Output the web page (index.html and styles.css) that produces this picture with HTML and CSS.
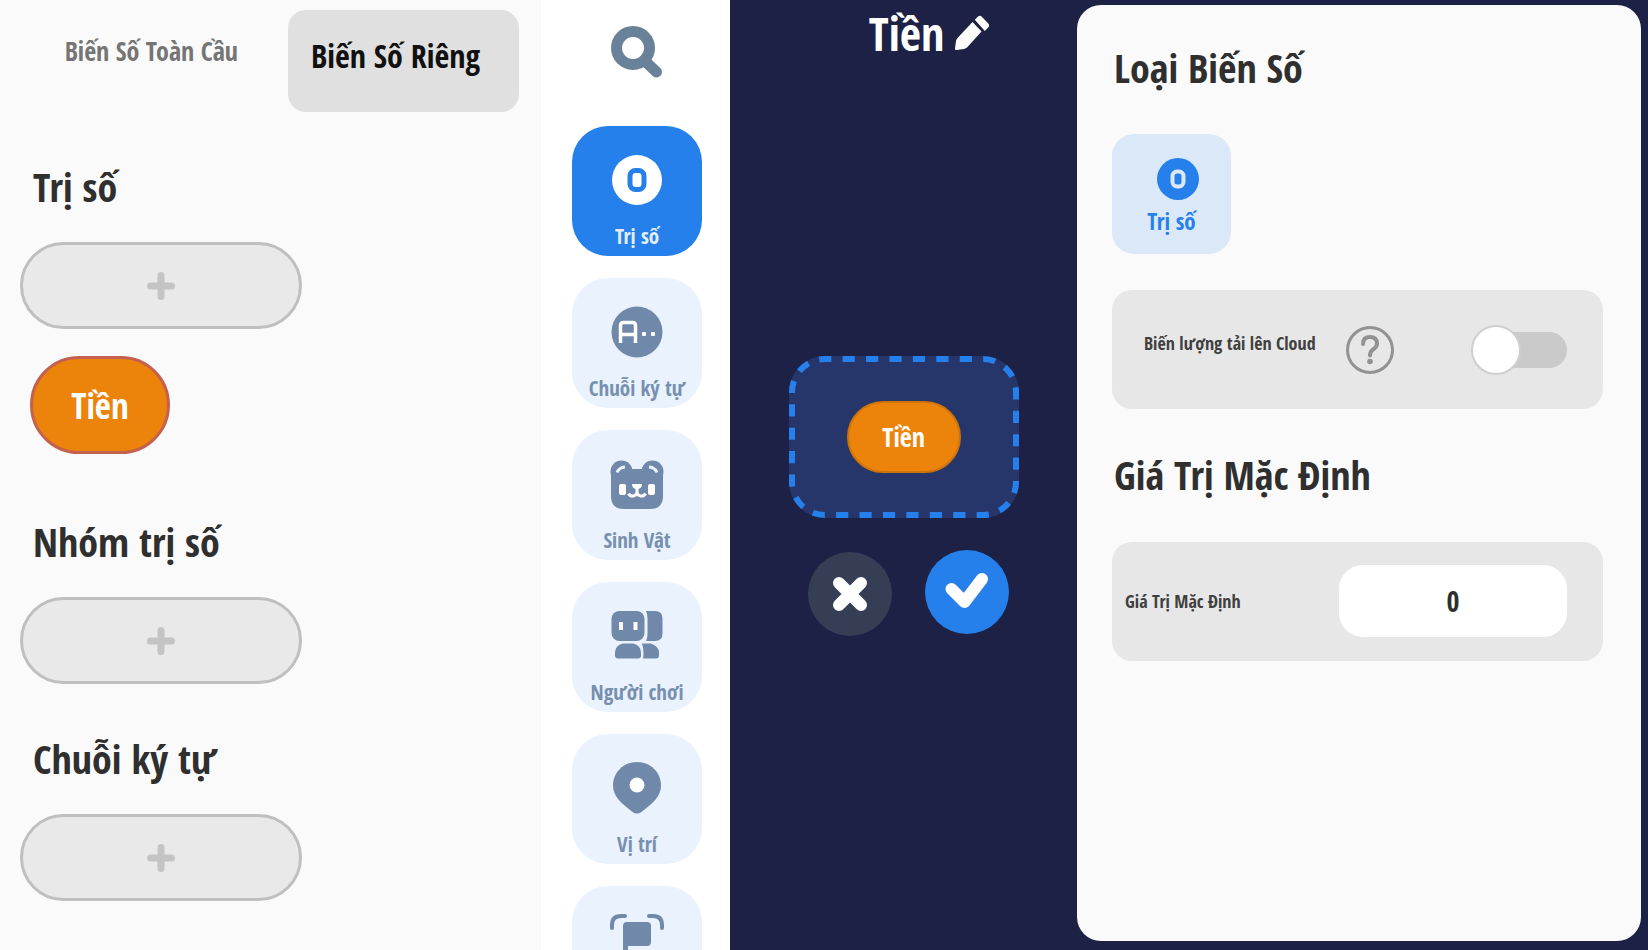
FILE: index.html
```html
<!DOCTYPE html>
<html lang="vi">
<head>
<meta charset="utf-8">
<meta name="viewport" content="width=device-width, initial-scale=1">
<title>Biến Số</title>
<link rel="stylesheet" href="styles.css">
</head>
<body>
<div class="app">
  <section class="vars">
    <nav class="tabs">
      <button class="tab" type="button">Biến Số Toàn Cầu</button>
      <button class="tab tab-active" type="button">Biến Số Riêng</button>
    </nav>

    <div class="group">
      <h2 class="group-title">Trị số</h2>
      <button class="add" type="button" aria-label="Thêm trị số">
        <svg class="plus" viewBox="0 0 28 28"><path d="M14 3.500v21M3.500 14h21"/></svg>
      </button>
      <button class="pill" type="button">Tiền</button>
    </div>

    <div class="group">
      <h2 class="group-title">Nhóm trị số</h2>
      <button class="add" type="button" aria-label="Thêm nhóm trị số">
        <svg class="plus" viewBox="0 0 28 28"><path d="M14 3.500v21M3.500 14h21"/></svg>
      </button>
    </div>

    <div class="group">
      <h2 class="group-title">Chuỗi ký tự</h2>
      <button class="add" type="button" aria-label="Thêm chuỗi ký tự">
        <svg class="plus" viewBox="0 0 28 28"><path d="M14 3.500v21M3.500 14h21"/></svg>
      </button>
    </div>
  </section>

  <nav class="rail">
    <button class="search" type="button" aria-label="Tìm kiếm">
      <svg class="search-icon" viewBox="0 0 52 52"><circle cx="22" cy="22" r="16.500"/><path d="M36 37l9.500 9"/></svg>
    </button>
    <button class="tile tile-active" type="button">
      <svg class="tile-icon" viewBox="0 0 54 54"><circle cx="27" cy="27" r="25" fill="#fff"/><rect x="20" y="17.500" width="14" height="19" rx="5.500" fill="none" stroke="#2680eb" stroke-width="5"/></svg>
      <span class="tile-label">Trị số</span>
    </button>
    <button class="tile" type="button">
      <svg class="tile-icon" viewBox="0 0 54 54"><circle cx="27" cy="27" r="25.500" fill="#7088aa"/><path d="M10.500 38V20.500q0-3 3-3h9q3 0 3 3V38M10.500 29.500h15" fill="none" stroke="#fff" stroke-width="3.500"/><rect x="32" y="27" width="4" height="4" rx="1" fill="#fff"/><rect x="41" y="27" width="4" height="4" rx="1" fill="#fff"/></svg>
      <span class="tile-label">Chuỗi ký tự</span>
    </button>
    <button class="tile" type="button">
      <svg class="tile-icon" viewBox="0 0 54 54"><g fill="#7088aa"><circle cx="11.500" cy="14.500" r="11"/><circle cx="42.500" cy="14.500" r="11"/><path d="M1 19q0-7 8-7h36q8 0 8 7v20q0 13-13 13H14Q1 52 1 39z"/></g><path d="M7 15.500q2-5 8-5.500M47 15.500q-2-5-8-5.500" fill="none" stroke="#eaf2fe" stroke-width="3"/><g fill="#fff"><rect x="9" y="27" width="7" height="11" rx="2"/><rect x="38" y="27" width="7" height="11" rx="2"/><path d="M22 27h10q0 4-3.500 5v5h-3v-5Q22 31 22 27z"/></g><path d="M18.500 36.500q1.500 3 5 2.500 2.500-.5 3.500-2.500 1 2 3.500 2.500 3.500.5 5-2.500" fill="none" stroke="#fff" stroke-width="3"/></svg>
      <span class="tile-label">Sinh Vật</span>
    </button>
    <button class="tile" type="button">
      <svg class="tile-icon" viewBox="0 0 54 54"><g fill="#7088aa"><rect x="1.500" y="2" width="33" height="30" rx="8"/><path d="M36 2h9q7.500 0 7.500 7.500v15Q52.500 32 45 32h-9q1.500-3 1.500-7V9q0-4-1.500-7z"/><path d="M13 34.500h10q8 2 8 9v3q0 3-3 3H8q-3 0-3-3v-3q0-7 8-9z"/><path d="M32 34.500h9q8 3 8 9v3q0 3-3 3H33q.5-2 .5-5 0-5-1.500-10z"/></g><path d="M11 13v8M25.500 13v8" stroke="#fff" stroke-width="4" fill="none"/></svg>
      <span class="tile-label">Người chơi</span>
    </button>
    <button class="tile" type="button">
      <svg class="tile-icon" viewBox="0 0 54 54"><path fill="#7088aa" d="M27 1C13.500 1 3 11.500 3 24.500c0 11 8.500 18 19.500 26.500q4.500 3 9 0C42.500 42.500 51 35.500 51 24.500 51 11.500 40.500 1 27 1z"/><circle cx="27" cy="24" r="7.500" fill="#fff"/></svg>
      <span class="tile-label">Vị trí</span>
    </button>
    <button class="tile" type="button" aria-label="Khu vực">
      <svg class="tile-icon" viewBox="0 0 54 54"><path d="M2 15V12Q2 3 11 3h4M39 3h4q9 0 9 9v3M2 40v3q0 9 9 9h4M39 52h4q9 0 9-9v-3" fill="none" stroke="#7088aa" stroke-width="4" stroke-linecap="round"/><path fill="#7088aa" d="M17 9h20q4 0 4 4v16q0 4-4 4H18v13h-5V13q0-4 4-4z"/></svg>
    </button>
  </nav>

  <main class="stage">
    <header class="stage-head">
      <h1 class="stage-title">Tiền</h1>
      <button class="edit" type="button" aria-label="Đổi tên">
        <svg class="edit-icon" viewBox="0 0 36 36"><path d="M18.500 7l9 9.500L13.500 32q-1.500 1.500-3.500 2L2.500 35Q.8 35.300 1 33.500L2 26q.3-2 2-3.500zM20.800 4.700l3-3q2-1.800 4 0l6.500 6.800q1.600 2 0 4l-3.500 3.500z" fill="#fff"/></svg>
      </button>
    </header>
    <div class="drop">
      <svg class="drop-frame" viewBox="0 0 230 162" preserveAspectRatio="none">
        <rect width="230" height="162" rx="36" fill="#26366a"/>
        <path d="M36 3h158a33 33 0 0 1 33 33v90a33 33 0 0 1-33 33H36a33 33 0 0 1-33-33V36A33 33 0 0 1 36 3z" pathLength="720" fill="none" stroke="#2680eb" stroke-width="6" stroke-dasharray="12.500 11.500" stroke-dashoffset="6"/>
      </svg>
      <button class="drop-pill" type="button">Tiền</button>
    </div>
    <div class="actions">
      <button class="round round-cancel" type="button" aria-label="Hủy">
        <svg class="round-icon" viewBox="0 0 44 44"><path d="M11 11l22 22M33 11L11 33"/></svg>
      </button>
      <button class="round round-ok" type="button" aria-label="Đồng ý">
        <svg class="round-icon" viewBox="0 0 44 44"><path d="M6.500 19l13 13L37 9"/></svg>
      </button>
    </div>
  </main>

  <aside class="panel">
    <h2 class="panel-title">Loại Biến Số</h2>
    <button class="type" type="button">
      <svg class="type-icon" viewBox="0 0 42 42"><circle cx="21" cy="21" r="21" fill="#2680eb"/><rect x="15.500" y="13.500" width="11" height="15" rx="4.500" fill="none" stroke="#dbe8f8" stroke-width="4"/></svg>
      <span class="type-label">Trị số</span>
    </button>
    <div class="card card-cloud">
      <label class="card-label" for="cloud">Biến lượng tải lên Cloud</label>
      <button class="help" type="button" aria-label="Trợ giúp">
        <svg class="help-icon" viewBox="0 0 48 48"><circle cx="24" cy="24" r="22.500" stroke-width="3"/><path d="M17 18q0-7 7-7t7 6.500q0 3.500-4 6-3 2-3 6" stroke-width="4" stroke-linecap="round"/><circle cx="24" cy="35.500" r="2.800" fill="#929292" stroke="none"/></svg>
      </button>
      <input class="switch" id="cloud" type="checkbox" role="switch">
    </div>
    <h2 class="panel-title">Giá Trị Mặc Định</h2>
    <div class="card card-value">
      <label class="card-label" for="value">Giá Trị Mặc Định</label>
      <input class="value" id="value" type="text" value="0">
    </div>
  </aside>
</div>
</body>
</html>
```
FILE: styles.css
```css
* { box-sizing: border-box; }

body {
  margin: 0;
  background: #1c2145;
  color: #2f2f2f;
  font-family: "Open Sans Condensed", "Open Sans", sans-serif;
  font-weight: 700;
}

button, input {
  margin: 0;
  padding: 0;
  border: 0;
  background: none;
  color: inherit;
  font: inherit;
}

button { cursor: pointer; }
svg { display: block; }
h1, h2 { margin: 0; font-weight: 700; }

.app {
  display: grid;
  grid-template-columns: minmax(0, 541fr) 189px minmax(0, 347fr) minmax(0, 571fr);
  height: 100vh;
  min-height: 700px;
  overflow: hidden;
}

/* Variable list */
.vars {
  background: #fafafa;
  overflow: hidden;
}

.tabs {
  display: flex;
  justify-content: flex-end;
  gap: 50px;
  padding: 10px 22px 0 0;
}

.tab {
  padding-bottom: 20px;
  color: #757575;
  font-size: 26px;
}

.tab-active {
  width: 231px;
  height: 102px;
  padding: 0 17px 12px 23px;
  border-radius: 18px;
  background: #e0e0e0;
  color: #111;
  font-size: 32px;
  text-align: left;
}

.group { padding: 47px 20px 0; }

.group-title {
  padding-left: 13px;
  font-size: 40px;
  line-height: 56px;
}

.add {
  display: grid;
  place-items: center;
  width: 282px;
  height: 87px;
  margin-top: 27px;
  border: 3px solid #bfbfbf;
  border-radius: 44px;
  background: #e9e9e9;
}

.plus {
  width: 28px;
  height: 28px;
  fill: none;
  stroke: #c4c4c4;
  stroke-width: 7;
  stroke-linecap: round;
}

.pill {
  width: 140px;
  height: 98px;
  margin: 27px 0 13px 10px;
  border: 3px solid #c4614e;
  border-radius: 50px;
  background: #ec830a;
  color: #fff;
  font-size: 35px;
}

/* Category rail */
.rail {
  display: flex;
  flex-direction: column;
  align-items: center;
  gap: 22px;
  padding-left: 3px;
  background: #fff;
  overflow: hidden;
}

.search {
  flex: none;
  padding: 26px 0;
}

.search-icon {
  width: 52px;
  height: 52px;
  fill: none;
  stroke: #698299;
  stroke-width: 11;
  stroke-linecap: round;
}

.tile {
  display: flex;
  flex: none;
  flex-direction: column;
  align-items: center;
  gap: 3px;
  width: 130px;
  height: 130px;
  padding-top: 27px;
  border-radius: 36px;
  background: #eaf2fe;
  color: #7790b0;
}

.tile-active {
  background: #2680eb;
  color: #e4effd;
}

.tile-icon {
  flex: none;
  width: 54px;
  height: 54px;
}

.tile-label {
  font-size: 21px;
  line-height: 52px;
}

/* Naming stage */
.stage {
  display: flex;
  flex-direction: column;
  align-items: center;
}

.stage-head {
  display: flex;
  align-items: center;
  gap: 10px;
  padding-left: 52px;
  color: #fff;
}

.stage-title {
  font-size: 46px;
  line-height: 66px;
}

.edit-icon {
  width: 36px;
  height: 36px;
}

.drop {
  display: grid;
  place-items: center;
  width: 230px;
  height: 162px;
  margin-top: 290px;
}

.drop-frame,
.drop-pill { grid-area: 1 / 1; }

.drop-frame {
  width: 100%;
  height: 100%;
}

.drop-pill {
  width: 114px;
  height: 72px;
  border: 2px solid #cc7408;
  border-radius: 36px;
  background: #ec830a;
  color: #fff;
  font-size: 26px;
}

.actions {
  display: flex;
  gap: 33px;
  margin-top: 32px;
  padding-left: 10px;
}

.round {
  display: grid;
  place-items: center;
  width: 84px;
  height: 84px;
  border-radius: 50%;
}

.round-cancel {
  margin-top: 2px;
  background: #363e56;
}

.round-ok { background: #2680eb; }

.round-icon {
  width: 44px;
  height: 44px;
  fill: none;
  stroke: #fff;
  stroke-width: 12;
  stroke-linecap: round;
  stroke-linejoin: round;
}

/* Settings panel */
.panel {
  margin: 5px 7px 9px 0;
  padding: 35px 38px 0 35px;
  border-radius: 24px;
  background: #fafafa;
}

.panel-title {
  padding-left: 2px;
  font-size: 40px;
  line-height: 56px;
}

.type {
  display: flex;
  flex-direction: column;
  align-items: center;
  width: 119px;
  height: 120px;
  margin: 38px 0 36px;
  padding-top: 24px;
  border-radius: 22px;
  background: #dbe8f8;
  color: #2680eb;
}

.type-icon {
  width: 42px;
  height: 42px;
  margin-left: 12px;
}

.type-label {
  font-size: 23px;
  line-height: 42px;
}

.card {
  display: flex;
  align-items: center;
  height: 119px;
  border-radius: 20px;
  background: #e7e7e7;
}

.card-label {
  color: #404040;
  font-size: 18px;
}

.card-cloud {
  margin-bottom: 38px;
  padding: 0 36px 0 32px;
}

.card-cloud .card-label { padding-bottom: 14px; }

.help {
  margin-left: 30px;
}

.help-icon {
  width: 48px;
  height: 48px;
  fill: none;
  stroke: #929292;
}

.switch {
  display: flex;
  align-items: center;
  width: 94px;
  height: 36px;
  margin-left: auto;
  border-radius: 18px;
  background: #cacaca;
  appearance: none;
  cursor: pointer;
}

.switch::before {
  content: "";
  width: 46px;
  height: 46px;
  margin-left: -2px;
  border: 2px solid #cfcfcf;
  border-radius: 50%;
  background: #fff;
}

.card-value {
  justify-content: space-between;
  margin-top: 39px;
  padding: 0 36px 2px 13px;
}

.value {
  width: 228px;
  height: 72px;
  border-radius: 24px;
  background: #fff;
  font-size: 28px;
  text-align: center;
}
```
